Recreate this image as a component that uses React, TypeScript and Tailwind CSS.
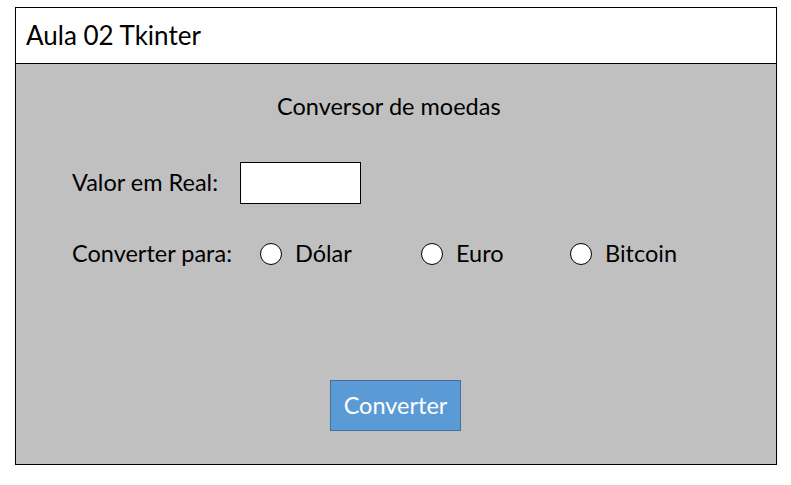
import React from 'react';

const options = [
  { label: 'Dólar', width: 'w-[161px]' },
  { label: 'Euro', width: 'w-[149px]' },
  { label: 'Bitcoin', width: 'w-auto' },
];

export default function App() {
  return (
    <div className="min-h-[485px] w-[791px] bg-white pl-[15px] pt-[7px] font-['Lato',sans-serif] text-black">
      <div className="flex h-[458px] w-[762px] flex-col border border-black">
        <div className="flex h-[56px] items-center border-b border-black bg-white pl-[10px] text-[26px]">
          Aula 02 Tkinter
        </div>
        <div className="flex flex-1 flex-col bg-[#c0c0c0]">
          <div className="mt-[28px] pl-[261px] text-[23.5px] leading-[28px]">Conversor de moedas</div>

          <div className="mt-[42px] flex h-[42px] items-center pl-[56px]">
            <span className="w-[168px] text-[23.5px]">Valor em Real:</span>
            <input
              type="text"
              className="h-[42px] w-[121px] border border-black bg-white outline-none"
            />
          </div>

          <div className="mt-[39px] flex h-[22px] items-center pl-[56px]">
            <span className="w-[188px] text-[23.5px]">Converter para:</span>
            {options.map((opt) => (
              <label key={opt.label} className={`flex items-center ${opt.width}`}>
                <span className="h-[22px] w-[22px] rounded-full border border-black bg-white" />
                <span className="ml-[13px] text-[23.5px]">{opt.label}</span>
              </label>
            ))}
          </div>

          <div className="mt-[115px] pl-[314px]">
            <button
              type="button"
              className="h-[51px] w-[131px] border border-[#41719c] bg-[#5b9bd5] text-[23.5px] text-white"
            >
              Converter
            </button>
          </div>
        </div>
      </div>
    </div>
  );
}
